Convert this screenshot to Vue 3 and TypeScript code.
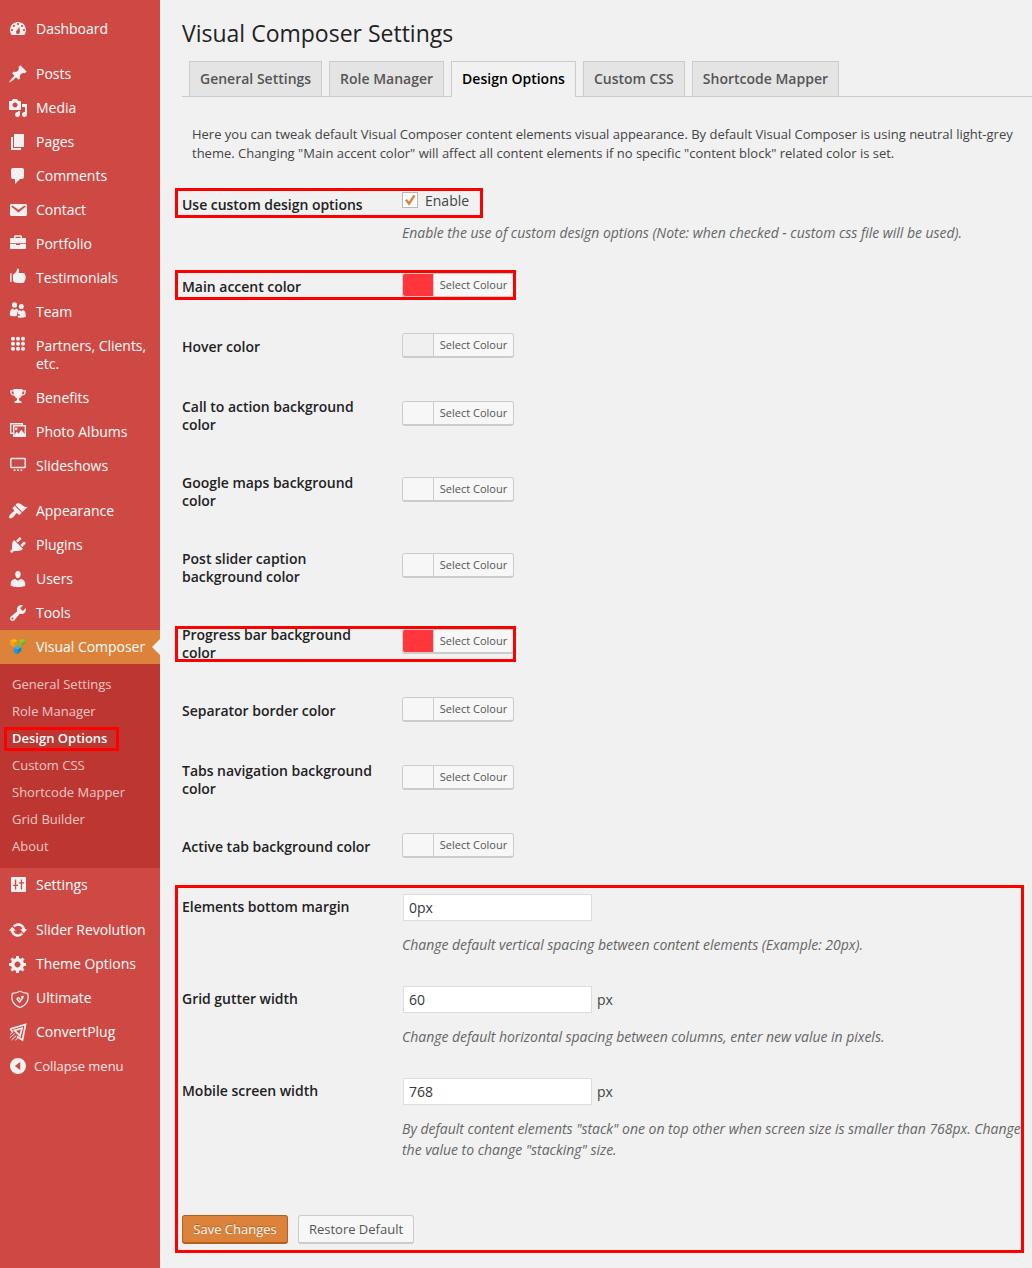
<script setup lang="ts">
interface MenuItem {
  label: string
  icon: string
  gapBefore?: boolean
  current?: boolean
}

interface ColorRow {
  label: string
  swatch: string
  height: number
  mark?: 'single' | 'double'
}

interface InputRow {
  label: string
  value: string
  unit: string
  note: string
}

const paths: Record<string, string> = {
  dashboard:
    'M3.76 16h12.48c1.1-1.37 1.76-3.11 1.76-5 0-4.42-3.58-8-8-8s-8 3.58-8 8c0 1.89.66 3.63 1.76 5zM10 4c.55 0 1 .45 1 1s-.45 1-1 1-1-.45-1-1 .45-1 1-1zM6 6c.55 0 1 .45 1 1s-.45 1-1 1-1-.45-1-1 .45-1 1-1zm8 0c.55 0 1 .45 1 1s-.45 1-1 1-1-.45-1-1 .45-1 1-1zm-2.63 1.9L12 13a2 2 0 1 1-3-1.7zM4 10c.55 0 1 .45 1 1s-.45 1-1 1-1-.45-1-1 .45-1 1-1zm12 0c.55 0 1 .45 1 1s-.45 1-1 1-1-.45-1-1 .45-1 1-1z',
  post: 'M10.44 3.02l1.82-1.82 6.36 6.35-1.83 1.82c-1.05-.68-2.48-.57-3.41.36l-.75.75c-.92.93-1.04 2.35-.35 3.41l-1.83 1.82-2.41-2.41-2.8 2.79c-.42.42-3.38 2.71-3.8 2.29s1.86-3.39 2.28-3.81l2.79-2.79L4.1 9.36l1.83-1.82c1.05.69 2.48.57 3.4-.36l.75-.75c.93-.92 1.05-2.35.36-3.41z',
  media:
    'M13 11V4c0-.55-.45-1-1-1h-1.67L9 1H5L3.67 3H2c-.55 0-1 .45-1 1v7c0 .55.45 1 1 1h10c.55 0 1-.45 1-1zM7 4.5c1.38 0 2.5 1.12 2.5 2.5S8.38 9.5 7 9.5 4.5 8.38 4.5 7 5.62 4.5 7 4.5zM14 6h5v10.5c0 1.38-1.12 2.5-2.5 2.5S14 17.88 14 16.5s1.12-2.5 2.5-2.5c.17 0 .34.02.5.05V9h-3V6zm-4 8.05V13h2v3.5c0 1.38-1.12 2.5-2.5 2.5S7 17.88 7 16.5 8.12 14 9.5 14c.17 0 .34.02.5.05z',
  page: 'M6 15V2h10v13H6zm-1 1h8v2H3V5h2v11z',
  comment:
    'M5 2h9c1.1 0 2 .9 2 2v7c0 1.1-.9 2-2 2h-2l-5 5v-5H5c-1.1 0-2-.9-2-2V4c0-1.1.9-2 2-2z',
  email:
    'M3.87 4h13.25C18.37 4 19 4.59 19 5.79v8.42c0 1.19-.63 1.79-1.88 1.79H3.87c-1.25 0-1.88-.6-1.88-1.79V5.79c0-1.2.63-1.79 1.88-1.79zm6.62 8.6l6.74-5.53c.24-.2.43-.66.13-1.07-.29-.41-.82-.42-1.17-.17l-5.7 3.86L4.8 5.83c-.35-.25-.88-.24-1.17.17-.3.41-.11.87.13 1.07z',
  briefcase:
    'M6 4V2.5Q6 1.3 7.2 1.3h5.6Q14 1.3 14 2.5V4h3q1 0 1 1v4.300H2V5q0-1 1-1zm1.500 0h5V2.800h-5zM2 10.100h6v1h4v-1h6v3.900q0 1-1 1H3q-1 0-1-1z',
  thumb:
    'M9.300 .5Q11.400 .1 11.100 3L10.700 5H15.500Q17.200 5.200 17 7 18.500 8.300 17.500 10 18 11.500 16.700 12.400 16.600 15 14 15H9Q6.500 14.800 5 13V6.500Q8.800 4.500 9.300 .5zM2.300 5.300H3.600V14H2.300Q1.800 9.500 2.300 5.300z',
  groups:
    'M6.500 .3a2.600 2.700 0 1 1 0 5.400 2.600 2.700 0 1 1 0-5.400zM13.300 1.900a2.500 2.600 0 1 1 0 5.200 2.500 2.600 0 1 1 0-5.200zM4.800 6.500L6.500 8l1.700-1.500Q10 6.800 10.400 9 8.700 10 8.900 13.700 5 15 1.900 13.600 1.600 7.200 4.800 6.500zM11.700 7.900L13.300 9.300l1.600-1.400Q18 8.500 17.800 14.700 14.300 16.200 9.800 15.400V13Q12 14.600 12.200 13.200 11.600 12 9.900 12 9.500 8.600 11.700 7.900z',
  grid: 'M5 .7a2 2 0 1 1 0 4 2 2 0 1 1 0-4zM10 .7a2 2 0 1 1 0 4 2 2 0 1 1 0-4zM15 .7a2 2 0 1 1 0 4 2 2 0 1 1 0-4zM5 5.700a2 2 0 1 1 0 4 2 2 0 1 1 0-4zM10 5.700a2 2 0 1 1 0 4 2 2 0 1 1 0-4zM15 5.700a2 2 0 1 1 0 4 2 2 0 1 1 0-4zM5 10.700a2 2 0 1 1 0 4 2 2 0 1 1 0-4zM10 10.700a2 2 0 1 1 0 4 2 2 0 1 1 0-4zM15 10.700a2 2 0 1 1 0 4 2 2 0 1 1 0-4z',
  trophy:
    'M5.500 1h9v1.200H18Q18.300 7.200 13.700 7.800 12.800 10 11 10.400V12Q11 13 13.500 13.400V15h-7V13.400Q9 13 9 12V10.400Q7.200 10 6.300 7.800 1.700 7.200 2 2.200H5.500zM3.300 3.400Q3.500 5.900 5.800 6.500L5.500 3.400zM14.500 3.400L14.200 6.500Q16.500 5.900 16.700 3.400z',
  gallery:
    'M2 1h13v2h3v12H5v-3H2zM3.400 2.400v8.200H5V3h8.600v-.6zM6.400 4.500v8.500L8.700 9.600l1.700 2.100L13.300 7.700l3.300 4.300V4.500zM8.200 5.400a1.400 1.400 0 1 1 0 2.800 1.400 1.400 0 1 1 0-2.800z',
  slides:
    'M3.500 1.700h13Q18 1.700 18 3.200v7.600Q18 12.300 16.500 12.300h-13Q2 12.300 2 10.800V3.200Q2 1.700 3.500 1.700zM3.500 3.200v7.600h13V3.200zM5.700 13.400h1.800v1.700H5.700zM9.100 13.400h1.800v1.700H9.100zM12.500 13.400h1.800v1.700h-1.800z',
  appearance:
    'M14.48 11.06L7.41 3.99l1.5-1.5c.5-.56 2.3-.47 3.51.32 1.21.8 1.43 1.28 2.91 2.1 1.18.64 2.45 1.26 4.45.85zm-.71.71L6.7 4.7 4.93 6.47c-.39.39-.39 1.02 0 1.41l1.06 1.06c.39.39.39 1.03 0 1.42-.6.6-1.43 1.11-2.21 1.69-.35.26-.7.53-1.01.84C1.43 14.23.4 16.08 1.4 17.07c.99 1 2.84-.03 4.18-1.36.31-.31.58-.66.85-1.02.57-.78 1.08-1.61 1.69-2.21.39-.39 1.02-.39 1.41 0l1.06 1.06c.39.39 1.02.39 1.41 0z',
  plugins:
    'M13.11 4.36L9.87 7.6 8 5.73l3.24-3.24c.35-.34 1.05-.2 1.56.32.52.51.66 1.21.31 1.55zm-8 1.77l.91-1.12 9.01 9.01-1.19.84c-.71.71-2.63 1.16-3.82 1.16H6.14L4.9 17.26c-.59.59-1.54.59-2.12 0-.59-.58-.59-1.53 0-2.12l1.24-1.24v-3.88c0-1.13.4-3.19 1.09-3.89zm7.26 3.97l3.24-3.24c.34-.35 1.04-.21 1.55.31.52.51.66 1.21.31 1.55l-3.24 3.25z',
  users:
    'M10 9.25c-2.27 0-2.73-3.44-2.73-3.44C7 4.02 7.82 2 9.97 2c2.16 0 2.98 2.02 2.71 3.81 0 0-.41 3.44-2.68 3.44zm0 2.57L12.72 10c2.39 0 4.52 2.33 4.52 4.53v2.49s-3.65 1.13-7.24 1.13c-3.65 0-7.24-1.13-7.24-1.13v-2.49c0-2.25 1.94-4.48 4.47-4.48z',
  tools:
    'M16.68 9.77c-1.34 1.34-3.3 1.67-4.95.99l-5.41 6.52c-.99.99-2.59.99-3.58 0s-.99-2.59 0-3.57l6.52-5.42c-.68-1.65-.35-3.61.99-4.95 1.28-1.28 3.12-1.62 4.72-1.06l-2.89 2.89 2.82 2.82 2.86-2.87c.53 1.58.18 3.39-1.08 4.65zM3.81 16.21c.4.39 1.04.39 1.43 0 .4-.4.4-1.04 0-1.43-.39-.4-1.03-.4-1.43 0-.39.39-.39 1.03 0 1.43z',
  settings:
    'M4 2h13q1 0 1 1v13q0 1-1 1H4q-1 0-1-1V3q0-1 1-1zM6.900 4.500v5.200H5V11h1.900v3.500h1.300V11H10V9.700H8.200V4.500zM12.800 4.500V7.200H11V8.500h1.800v6h1.300v-6H16V7.200h-1.900V4.500z',
  update:
    'M10.2 3.28c3.53 0 6.43 2.61 6.92 6h2.08l-3.5 4-3.5-4h2.32c-.45-1.97-2.21-3.45-4.32-3.45-1.45 0-2.73.71-3.54 1.78L4.95 5.66C6.23 4.2 8.11 3.28 10.2 3.28zm-.4 13.44c-3.52 0-6.43-2.61-6.92-6H.8l3.5-4c1.17 1.33 2.33 2.67 3.5 4H5.48c.45 1.97 2.21 3.45 4.32 3.45 1.45 0 2.73-.71 3.54-1.78l1.71 1.95c-1.28 1.46-3.15 2.38-5.25 2.38z',
  generic:
    'M18 12h-2.18c-.17.7-.44 1.35-.81 1.93l1.54 1.54-2.1 2.1-1.54-1.54c-.58.36-1.23.63-1.91.79V19H8v-2.18c-.68-.16-1.33-.43-1.91-.79l-1.54 1.54-2.12-2.12 1.54-1.54c-.36-.58-.63-1.23-.79-1.91H1V9.03h2.17c.16-.7.44-1.35.8-1.94L2.43 5.55l2.1-2.1 1.54 1.54c.58-.37 1.24-.64 1.93-.81V2h3v2.18c.68.16 1.33.43 1.91.79l1.54-1.54 2.12 2.12-1.54 1.54c.36.59.64 1.24.8 1.94H18V12zm-8.5 1.5c1.66 0 3-1.34 3-3s-1.34-3-3-3-3 1.34-3 3 1.34 3 3 3z',
  collapse:
    'M10 2a8 8 0 1 1 0 16 8 8 0 1 1 0-16zM12.200 6L6.800 10l5.400 4z',
}

const topItems: MenuItem[] = [
  { label: 'Dashboard', icon: 'dashboard' },
  { label: 'Posts', icon: 'post', gapBefore: true },
  { label: 'Media', icon: 'media' },
  { label: 'Pages', icon: 'page' },
  { label: 'Comments', icon: 'comment' },
  { label: 'Contact', icon: 'email' },
  { label: 'Portfolio', icon: 'briefcase' },
  { label: 'Testimonials', icon: 'thumb' },
  { label: 'Team', icon: 'groups' },
  { label: 'Partners, Clients, etc.', icon: 'grid' },
  { label: 'Benefits', icon: 'trophy' },
  { label: 'Photo Albums', icon: 'gallery' },
  { label: 'Slideshows', icon: 'slides' },
  { label: 'Appearance', icon: 'appearance', gapBefore: true },
  { label: 'Plugins', icon: 'plugins' },
  { label: 'Users', icon: 'users' },
  { label: 'Tools', icon: 'tools' },
  { label: 'Visual Composer', icon: 'composer', current: true },
]

const subItems = [
  'General Settings',
  'Role Manager',
  'Design Options',
  'Custom CSS',
  'Shortcode Mapper',
  'Grid Builder',
  'About',
]

const bottomItems: MenuItem[] = [
  { label: 'Settings', icon: 'settings' },
  { label: 'Slider Revolution', icon: 'update', gapBefore: true },
  { label: 'Theme Options', icon: 'generic' },
  { label: 'Ultimate', icon: 'shield' },
  { label: 'ConvertPlug', icon: 'convert' },
]

const tabs = ['General Settings', 'Role Manager', 'Design Options', 'Custom CSS', 'Shortcode Mapper']

const colorRows: ColorRow[] = [
  { label: 'Main accent color', swatch: '#ff363b', height: 60, mark: 'single' },
  { label: 'Hover color', swatch: '#f0f0f0', height: 60 },
  { label: 'Call to action background\ncolor', swatch: '#f7f7f7', height: 76 },
  { label: 'Google maps background\ncolor', swatch: '#f7f7f7', height: 76 },
  { label: 'Post slider caption\nbackground color', swatch: '#f7f7f7', height: 76 },
  { label: 'Progress bar background\ncolor', swatch: '#ff363b', height: 76, mark: 'double' },
  { label: 'Separator border color', swatch: '#f7f7f7', height: 60 },
  { label: 'Tabs navigation background\ncolor', swatch: '#f7f7f7', height: 76 },
  { label: 'Active tab background color', swatch: '#f7f7f7', height: 60 },
]

const inputRows: InputRow[] = [
  {
    label: 'Elements bottom margin',
    value: '0px',
    unit: '',
    note: 'Change default vertical spacing between content elements (Example: 20px).',
  },
  {
    label: 'Grid gutter width',
    value: '60',
    unit: 'px',
    note: 'Change default horizontal spacing between columns, enter new value in pixels.',
  },
  {
    label: 'Mobile screen width',
    value: '768',
    unit: 'px',
    note: 'By default content elements "stack" one on top other when screen size is smaller than 768px. Change\nthe value to change "stacking" size.',
  },
]
</script>

<template>
  <div class="admin">
    <nav class="sidebar">
      <template v-for="item in topItems" :key="item.label">
        <div class="item" :class="{ gap: item.gapBefore, current: item.current }">
          <svg v-if="item.icon === 'composer'" class="icon" viewBox="0 0 20 20">
            <path d="M2 3.700l2.500-1.400h2.600l2.400 1.600-3.500 2z" fill="#fcb813" />
            <path d="M2 3.700l4 2.200v4.600L2 7.500z" fill="#f5a216" />
            <path d="M6 5.900l3.500-2v4.200L6 10.500z" fill="#dd9a12" />
            <path d="M10.200 4l3.300-1.700h2.300L17.300 4l-3.500 2z" fill="#8fc93a" />
            <path d="M10.200 4l3.600 2v3.900l-3.600-2z" fill="#a3ad25" />
            <path d="M13.800 6l3.500-2v2.600l-3.500 3.300z" fill="#79a82b" />
            <path d="M5.800 10.700l3.500-2.200 4 1.800-3.900 2.300z" fill="#33b5ea" />
            <path d="M5.800 10.700l3.600 1.900v4.800L5.800 15.400z" fill="#1c9ade" />
            <path d="M9.400 12.600l3.900-2.300v3.500L9.400 17.400z" fill="#1582c0" />
          </svg>
          <svg v-else class="icon" viewBox="0 0 20 20">
            <path fill-rule="evenodd" :d="paths[item.icon]" />
          </svg>
          <span class="name">{{ item.label }}</span>
        </div>
      </template>

      <ul class="submenu">
        <li v-for="sub in subItems" :key="sub" :class="{ active: sub === 'Design Options' }">{{ sub }}</li>
      </ul>

      <div v-for="item in bottomItems" :key="item.label" class="item" :class="{ gap: item.gapBefore }">
        <svg v-if="item.icon === 'shield'" class="icon line" viewBox="0 0 20 20">
          <path
            d="M12 3.300Q8.500 5.200 4.300 5.400 1.800 15.500 12 19.500 22.200 15.500 19.700 5.400 15.500 5.200 12 3.300z"
            stroke-width="1.200"
          />
          <path d="M8.700 10.700l3 3.400 3.900-5.700M10.700 9.700l1.500 1.900M13.300 8.700l1.500 1.700M8.700 10.700l2-1M13.300 8.700l2.300-.3" stroke-width="1.300" />
        </svg>
        <svg v-else-if="item.icon === 'convert'" class="icon line" viewBox="0 0 20 20">
          <path d="M2.200 7L17.500 2.500 14.500 18 9 14.500" stroke-width="1.700" />
          <path d="M2.200 7l2.300 2.800M6.500 8.400L14 6.200l-2 7.600z" stroke-width="1.700" />
          <path d="M2 12.500l3.300-2.700M1.800 15.800l5-4.200M3.500 18l4.700-4.300M7.300 18.200l2.400-2.200" stroke-width="1" />
        </svg>
        <svg v-else class="icon" viewBox="0 0 20 20">
          <path fill-rule="evenodd" :d="paths[item.icon]" />
        </svg>
        <span class="name">{{ item.label }}</span>
      </div>
      <div class="item collapse">
        <svg class="icon" viewBox="0 0 20 20"><path fill-rule="evenodd" :d="paths.collapse" /></svg>
        <span class="name">Collapse menu</span>
      </div>
    </nav>

    <main class="content">
      <h1>Visual Composer Settings</h1>
      <div class="tabs">
        <a v-for="tab in tabs" :key="tab" class="tab" :class="{ on: tab === 'Design Options' }">{{ tab }}</a>
      </div>
      <p class="intro">
        Here you can tweak default Visual Composer content elements visual appearance. By default Visual Composer is using neutral light-grey<br />
        theme. Changing "Main accent color" will affect all content elements if no specific "content block" related color is set.
      </p>

      <div class="row enable mark-enable">
        <div class="label">Use custom design options</div>
        <div class="field">
          <label class="check">
            <span class="box">
              <svg viewBox="0 0 16 16" width="16" height="16">
                <path d="M4 7.600l3 4 5.500-8.200" fill="none" stroke="#dd823b" stroke-width="2.400" />
              </svg>
            </span>
            <span>Enable</span>
          </label>
          <p class="note">Enable the use of custom design options (Note: when checked - custom css file will be used).</p>
        </div>
      </div>

      <div
        v-for="row in colorRows"
        :key="row.label"
        class="row"
        :class="row.mark ? 'mark-' + row.mark : ''"
        :style="{ height: row.height + 'px' }"
      >
        <div class="label">{{ row.label }}</div>
        <div class="picker">
          <span class="swatch" :style="{ background: row.swatch }"></span>
          <span class="pick">Select Colour</span>
        </div>
      </div>

      <section class="sizes">
        <div v-for="row in inputRows" :key="row.label" class="row sized">
          <div class="label">{{ row.label }}</div>
          <div class="field">
            <div class="entry">
              <input type="text" :value="row.value" />
              <span>{{ row.unit }}</span>
            </div>
            <p class="note">{{ row.note }}</p>
          </div>
        </div>
        <div class="actions">
          <button class="btn primary">Save Changes</button>
          <button class="btn">Restore Default</button>
        </div>
      </section>
    </main>
  </div>
</template>

<style>
body {
  background: #f1f1f1;
}
</style>

<style scoped>
*,
*::after {
  box-sizing: border-box;
}

.admin {
  display: flex;
  height: 1268px;
  overflow: hidden;
  background: #f1f1f1;
  color: #444;
  font-family: 'Open Sans', sans-serif;
  font-size: 14px;
}

.sidebar {
  flex: none;
  width: 160px;
  padding-top: 12px;
  background: #cf4944;
  color: #fff;
}

.item {
  position: relative;
  display: flex;
  align-items: flex-start;
  min-height: 34px;
  padding: 8px 0 8px 8px;
  line-height: 18px;
}

.item.gap {
  margin-top: 11px;
}

.icon {
  flex: none;
  width: 20px;
  height: 20px;
  margin: -1px 8px -1px 0;
  overflow: visible;
  fill: #f3f1f1;
}

.icon.line {
  fill: none;
  stroke: #f3f1f1;
}

.name {
  letter-spacing: -0.03px;
}

.item.current {
  background: #dd823b;
}

.item.current::after {
  content: '';
  position: absolute;
  right: 0;
  top: 9px;
  border: 8px solid transparent;
  border-left: 0;
  border-right-color: #f1f1f1;
}

.collapse .icon {
  margin-right: 6px;
}

.collapse .name {
  font-size: 13px;
  color: #f8e6e5;
}

.submenu {
  margin: 0;
  padding: 7px 0 8px;
  background: #be3631;
  list-style: none;
  font-size: 13px;
  color: #f1c8c7;
}

.submenu li {
  position: relative;
  height: 27px;
  padding-left: 12px;
  line-height: 27px;
}

.submenu .active {
  color: #fff;
  font-weight: 600;
}

.submenu .active::after {
  content: '';
  position: absolute;
  left: 4px;
  top: 2px;
  width: 115px;
  height: 24px;
  border: 3px solid #f00;
}

.content {
  flex: 1;
  min-width: 0;
  padding: 18px 0 0 22px;
}

h1 {
  margin: 0;
  height: 43px;
  color: #222;
  font-size: 23px;
  font-weight: 400;
  line-height: 30px;
}

.tabs {
  display: flex;
  gap: 7px;
  height: 36px;
  padding-left: 7px;
  border-bottom: 1px solid #ccc;
}

.tab {
  height: 35px;
  padding: 0 10px;
  border: 1px solid #ccc;
  border-bottom: 0;
  background: #e4e4e4;
  color: #555;
  font-weight: 600;
  line-height: 34px;
  white-space: nowrap;
}

.tab.on {
  height: 36px;
  background: #f1f1f1;
  color: #000;
}

.intro {
  margin: 28px 0 13px 10px;
  font-size: 13px;
  line-height: 19px;
  letter-spacing: -0.006px;
  white-space: nowrap;
}

.row {
  position: relative;
  display: grid;
  grid-template-columns: 220px 1fr;
}

.row.enable {
  height: 82px;
}

.label {
  padding-top: 20px;
  color: #222;
  font-weight: 600;
  line-height: 18px;
  letter-spacing: -0.03px;
  white-space: pre-line;
}

.check {
  display: flex;
  align-items: center;
  gap: 7px;
  height: 20px;
  margin-top: 14px;
}

.box {
  width: 16px;
  height: 16px;
  border: 1px solid #b4b9be;
  background: #fff;
}

.box svg {
  display: block;
  margin: -1px;
}

.note {
  margin: 12px 0 0;
  color: #666;
  font-style: italic;
  font-size: 14px;
  line-height: 21px;
  letter-spacing: -0.026px;
  white-space: pre;
}

.picker {
  display: flex;
  align-self: center;
  width: 112px;
  height: 25px;
  margin-bottom: 5px;
  border: 1px solid #ccc;
  border-bottom-width: 2px;
  border-radius: 3px;
  background: #f7f7f7;
}

.swatch {
  width: 31px;
  border-right: 1px solid #ccc;
  border-radius: 2px 0 0 2px;
}

.pick {
  flex: 1;
  text-align: center;
  font-size: 11px;
  line-height: 22px;
  color: #555;
}

.mark-enable::after,
.mark-single::after,
.mark-double::after,
.sizes::after {
  content: '';
  position: absolute;
  left: -7px;
  top: 12px;
  width: 341px;
  height: 30px;
  border: 3px solid #f00;
  pointer-events: none;
}

.mark-enable::after {
  width: 308px;
}

.mark-double::after {
  top: 20px;
  height: 36px;
}

.sizes {
  position: relative;
}

.sizes::after {
  top: 7px;
  width: 849px;
  height: 368px;
}

.row.sized {
  height: 92px;
}

.sized .field {
  padding-top: 16px;
}

.sized .note {
  margin-top: 13px;
}

.entry {
  display: flex;
  align-items: center;
  gap: 5px;
  height: 27px;
}

input {
  width: 189px;
  height: 27px;
  margin-left: 1px;
  padding: 2px 5px;
  border: 1px solid #ddd;
  background: #fff;
  color: #32373c;
  font: inherit;
}

.actions {
  display: flex;
  gap: 10px;
  padding-top: 61px;
}

.btn {
  height: 29px;
  width: 116px;
  padding: 0;
  border: 1px solid #ccc;
  border-bottom-width: 2px;
  border-radius: 3px;
  background: #f7f7f7;
  color: #555;
  font: 13px/26px 'Open Sans', sans-serif;
}

.btn.primary {
  width: 106px;
  border-color: #b2611e;
  background: #dd823b;
  color: #fff;
  text-shadow: 0 -1px 1px #b2611e;
}
</style>
